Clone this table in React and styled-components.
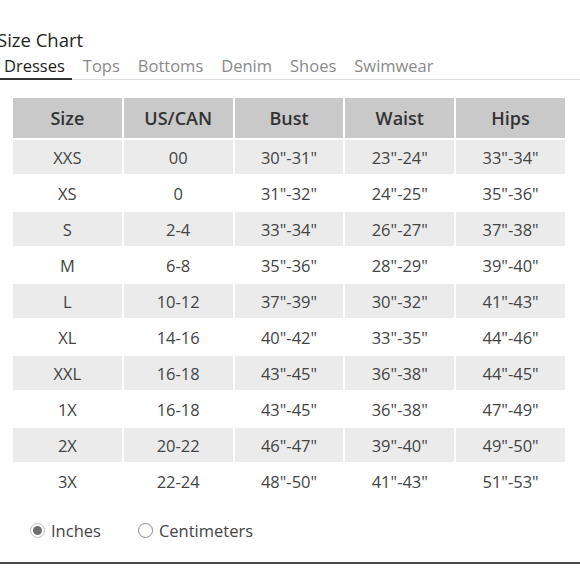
import React from 'react';
import styled, { createGlobalStyle } from 'styled-components';

const GlobalStyle = createGlobalStyle`
  html, body {
    overflow: hidden;
  }
  body {
    margin: 0;
    background: #fff;
    font-family: "Open Sans", "Liberation Sans", sans-serif;
    color: #333;
  }
`;

const Page = styled.div`
  width: 580px;
  height: 580px;
  overflow: hidden;
  display: flex;
  flex-direction: column;
`;

const Title = styled.h2`
  margin: 28px 0 0 -3px;
  font-size: 18.5px;
  font-weight: 400;
  color: #222;
  line-height: 24px;
`;

const TabBar = styled.div`
  display: flex;
  gap: 14px;
  margin-top: 3px;
  border-bottom: 1px solid #ddd;
`;

const Tab = styled.div`
  padding: 0 7px 1px 4px;
  margin-right: -7px;
  font-size: 16.5px;
  line-height: 22px;
  color: ${(p) => (p.active ? '#222' : '#8a8a8a')};
  border-bottom: 2px solid ${(p) => (p.active ? '#333' : 'transparent')};
  margin-bottom: -1px;
`;

const Table = styled.table`
  margin: 16px 0 0 11px;
  width: 556px;
  border-collapse: separate;
  border-spacing: 2px;
  table-layout: fixed;
`;

const HeadCell = styled.th`
  height: 40px;
  padding: 0;
  background: #c9c9c9;
  color: #333;
  font-size: 18px;
  font-weight: 600;
  text-align: center;
`;

const Row = styled.tr`
  background: ${(p) => (p.striped ? '#ebebeb' : '#fff')};
`;

const Cell = styled.td`
  height: 34px;
  padding: 0;
  text-align: center;
  font-size: 16.5px;
  color: #444;
`;

const Units = styled.div`
  display: flex;
  align-items: center;
  gap: 37px;
  margin: 19px 0 0 30px;
`;

const Option = styled.label`
  display: flex;
  align-items: center;
  gap: 6px;
  font-size: 16.5px;
  color: #444;
`;

const Radio = styled.span`
  box-sizing: border-box;
  width: 15px;
  height: 15px;
  border-radius: 50%;
  border: 1.5px solid ${(p) => (p.checked ? '#bbb' : '#888')};
  display: flex;
  align-items: center;
  justify-content: center;
  &::after {
    content: '';
    width: 9px;
    height: 9px;
    border-radius: 50%;
    background: ${(p) => (p.checked ? '#6f6f6f' : 'transparent')};
  }
`;

const BottomRule = styled.div`
  margin-top: 20px;
  height: 2px;
  background: #4a4a4a;
`;

const tabs = ['Dresses', 'Tops', 'Bottoms', 'Denim', 'Shoes', 'Swimwear'];
const headers = ['Size', 'US/CAN', 'Bust', 'Waist', 'Hips'];
const rows = [
  ['XXS', '00', '30"-31"', '23"-24"', '33"-34"'],
  ['XS', '0', '31"-32"', '24"-25"', '35"-36"'],
  ['S', '2-4', '33"-34"', '26"-27"', '37"-38"'],
  ['M', '6-8', '35"-36"', '28"-29"', '39"-40"'],
  ['L', '10-12', '37"-39"', '30"-32"', '41"-43"'],
  ['XL', '14-16', '40"-42"', '33"-35"', '44"-46"'],
  ['XXL', '16-18', '43"-45"', '36"-38"', '44"-45"'],
  ['1X', '16-18', '43"-45"', '36"-38"', '47"-49"'],
  ['2X', '20-22', '46"-47"', '39"-40"', '49"-50"'],
  ['3X', '22-24', '48"-50"', '41"-43"', '51"-53"']
];

export default function App() {
  return (
    <Page>
      <GlobalStyle />
      <Title>Size Chart</Title>
      <TabBar>
        {tabs.map((t, i) => (
          <Tab key={t} active={i === 0}>
            {t}
          </Tab>
        ))}
      </TabBar>
      <Table>
        <thead>
          <tr>
            {headers.map((h) => (
              <HeadCell key={h}>{h}</HeadCell>
            ))}
          </tr>
        </thead>
        <tbody>
          {rows.map((r, i) => (
            <Row key={r[0]} striped={i % 2 === 0}>
              {r.map((c, j) => (
                <Cell key={j}>{c}</Cell>
              ))}
            </Row>
          ))}
        </tbody>
      </Table>
      <Units>
        <Option>
          <Radio checked />
          Inches
        </Option>
        <Option>
          <Radio />
          Centimeters
        </Option>
      </Units>
      <BottomRule />
    </Page>
  );
}
